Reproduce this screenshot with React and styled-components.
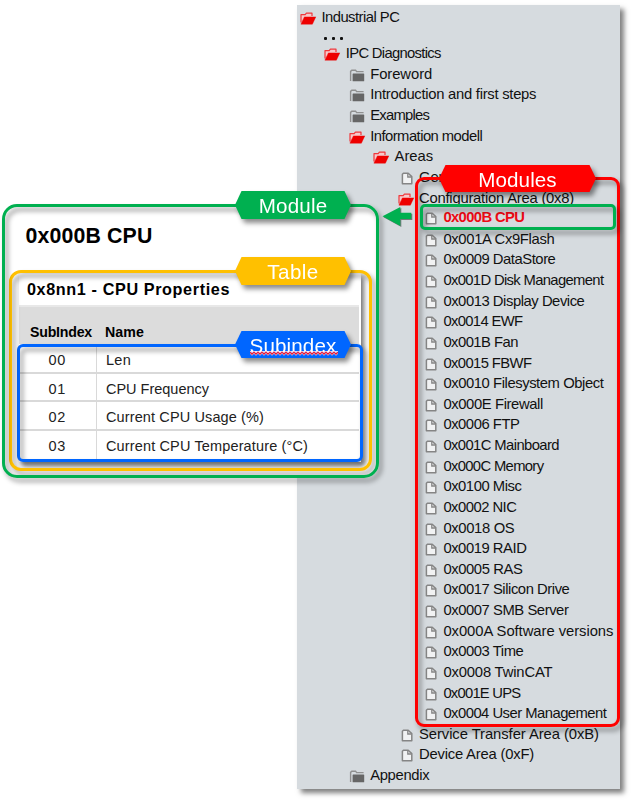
import React, { useLayoutEffect, useRef, useState } from 'react';
import styled, { createGlobalStyle, css } from 'styled-components';

const GREEN = '#00b050';
const AMBER = '#ffc000';
const BLUE = '#0066ff';
const RED = '#ff0000';

const GlobalStyle = createGlobalStyle`
  *, *::before, *::after { box-sizing: border-box; }
  body { margin: 0; background: #fff; font-family: "Liberation Sans", Arial, sans-serif; }
`;

const Page = styled.main`
  position: relative;
  display: grid;
  width: 632px;
  height: 802px;
  overflow: hidden;
  align-items: start;
  > * { grid-area: 1 / 1; }
`;

const TreePanel = styled.nav`
  width: 323px;
  height: 784px;
  margin: 5px 0 0 297px;
  padding-top: 2.1px;
  background: #d6dbdf;
  box-shadow: 4px 4px 5px rgba(0, 0, 0, 0.5);
`;

const TreeRow = styled.div`
  display: flex;
  align-items: center;
  height: 20.64px;
  padding-left: ${p => 3 + p.$depth * 24.4}px;
  padding-bottom: ${p => (p.$active ? 2 : 0)}px;
  font-size: 14.8px;
  color: ${p => (p.$active ? '#ee0a14' : '#111')};
  font-weight: ${p => (p.$active ? 700 : 400)};
`;

const Dots = styled.div`
  display: flex;
  gap: 5px;
  height: 15.2px;
  padding: 9px 0 0 27px;
`;

const Dot = styled.i`
  width: 3px;
  height: 3px;
  border-radius: 1px;
  background: #111;
`;

const IconSlot = styled.span`
  display: flex;
  flex: none;
  width: 21.4px;
  margin-top: 3px;
  svg { display: block; }
`;

const Text = styled.span`
  white-space: pre;
  flex: none;
`;

/* Spreads a label's letters so that it takes exactly the given width. */
function FittedText({ width, children }) {
  const ref = useRef(null);
  const [spacing, setSpacing] = useState(0);
  useLayoutEffect(() => {
    const natural = ref.current.getBoundingClientRect().width;
    setSpacing((width - natural) / children.length);
  }, []);
  return <Text ref={ref} style={{ letterSpacing: spacing }}>{children}</Text>;
}

const OpenFolder = () => (
  <svg width="17" height="13" viewBox="0 0 17 13">
    <path d="M1 10.5V2.6H5.2L6.4 1.2H12V4" fill="#f6c9cb" stroke="#f0383c" strokeWidth="1.2" strokeLinejoin="round" />
    <path d="M4.4 4.9H15.8L12.4 12.2H0.9Z" fill="#ee0000" stroke="#ee0000" strokeWidth="0.4" strokeLinejoin="round" />
  </svg>
);

const ClosedFolder = () => (
  <svg width="17" height="13" viewBox="0 0 17 13">
    <path d="M1.6 12V2.4L2.8 1.2H6.6L7.6 2.6H14.6" fill="none" stroke="#909090" strokeWidth="1.4" />
    <rect x="3.6" y="4.5" width="11.6" height="7.8" rx="0.6" fill="#666" />
  </svg>
);

const PageIcon = () => (
  <svg width="17" height="13" viewBox="0 0 17 13">
    <path d="M5.4 1.2H10.2L13.8 4.6V11.7H4.4V2.2Z" fill="#f1f2f3" stroke="#858585" strokeWidth="1.5" strokeLinejoin="round" />
    <path d="M9.8 1.4V5H13.4" fill="none" stroke="#858585" strokeWidth="1.3" />
  </svg>
);

const ICONS = { open: OpenFolder, closed: ClosedFolder, page: PageIcon };

const rows = [
  [1, 'open', 'IPC Diagnostics', 95],
  [2, 'closed', 'Foreword', 62],
  [2, 'closed', 'Introduction and first steps', 166],
  [2, 'closed', 'Examples', 59],
  [2, 'open', 'Information modell', 112],
  [3, 'open', 'Areas', 38.5],
  [4, 'page', 'General Area (0x0)', 124],
  [4, 'open', 'Configuration Area (0x8)', 155],
  [5, 'page', '0x000B CPU', 81, true],
  [5, 'page', '0x001A Cx9Flash', 111],
  [5, 'page', '0x0009 DataStore', 112],
  [5, 'page', '0x001D Disk Management', 160],
  [5, 'page', '0x0013 Display Device', 141],
  [5, 'page', '0x0014 EWF', 79],
  [5, 'page', '0x001B Fan', 74.5],
  [5, 'page', '0x0015 FBWF', 88],
  [5, 'page', '0x0010 Filesystem Object', 160],
  [5, 'page', '0x000E Firewall', 99.5],
  [5, 'page', '0x0006 FTP', 76],
  [5, 'page', '0x001C Mainboard', 115.5],
  [5, 'page', '0x000C Memory', 100],
  [5, 'page', '0x0100 Misc', 78],
  [5, 'page', '0x0002 NIC', 73],
  [5, 'page', '0x0018 OS', 71],
  [5, 'page', '0x0019 RAID', 83],
  [5, 'page', '0x0005 RAS', 79],
  [5, 'page', '0x0017 Silicon Drive', 126],
  [5, 'page', '0x0007 SMB Server', 125],
  [5, 'page', '0x000A Software versions', 170],
  [5, 'page', '0x0003 Time', 80],
  [5, 'page', '0x0008 TwinCAT', 109],
  [5, 'page', '0x001E UPS', 77],
  [5, 'page', '0x0004 User Management', 163],
  [4, 'page', 'Service Transfer Area (0xB)', 180],
  [4, 'page', 'Device Area (0xF)', 115],
  [2, 'closed', 'Appendix', 59],
];

const Node = ({ row: [depth, icon, label, width, active] }) => {
  const Icon = ICONS[icon];
  return (
    <TreeRow $depth={depth} $active={active}>
      <IconSlot><Icon /></IconSlot>
      <FittedText width={width}>{label}</FittedText>
    </TreeRow>
  );
};

const outline = css`
  content: "";
  position: absolute;
  inset: 0;
  border: 3px solid ${p => p.$color};
  border-radius: ${p => p.$radius}px;
  filter: drop-shadow(3px 4px 2.5px rgba(0, 0, 0, 0.42));
  pointer-events: none;
`;

const ModuleCard = styled.section`
  position: relative;
  width: 377px;
  height: 273.5px;
  margin: 204px 0 0 2px;
  padding: 66px 7px 6.5px;
  border-radius: 15px;
  background: #fff;
  &::after { ${outline} }
`;

const ModuleTitle = styled.h1`
  height: 46px;
  margin: -46px 0 0 16.5px;
  font-size: 21.3px;
  line-height: 25px;
`;

const TableFrame = styled.div`
  position: relative;
  height: 201px;
  width: 363px;
  padding: 4px 10px 8px 10px;
  border-radius: 12px;
  &::after { ${outline} }
`;

const PropertyTable = styled.div`
  height: 188px;
  width: 342px;
  background: #fff;
  box-shadow: 3px 3px 5px rgba(0, 0, 0, 0.55);
`;

const TableTitle = styled.h2`
  height: 31px;
  margin: 0;
  padding: 5px 0 0 8px;
  font-size: 16.2px;
  line-height: 20px;
`;

const HeaderRow = styled.div`
  display: grid;
  grid-template-columns: 77px 1fr;
  width: 340px;
  height: 39px;
  padding-top: 17px;
  background: #dcdcdc;
  border-top: 2px solid #e8e8e8;
  font-size: 14.2px;
  font-weight: 700;
  line-height: 16px;
  > :first-child { padding-left: 11px; }
  > :last-child { padding-left: 9px; }
`;

const Entries = styled.div`
  position: relative;
  width: 346px;
  height: 118px;
  margin-left: -2px;
  padding: 1px 4px 0 2px;
  &::after { ${outline} }
`;

const Entry = styled.div`
  display: grid;
  grid-template-columns: 78px 1fr;
  height: 28.5px;
  border-bottom: 2px solid #d9d9d9;
  font-size: 14.5px;
  line-height: 30px;
  color: #222;
  &:last-child { border-color: transparent; }
  > :first-child { border-right: 1.5px solid #d9d9d9; padding-left: 29.5px; }
  > :last-child { padding-left: 9px; }
`;

const Badge = styled.div`
  position: absolute;
  z-index: 3;
  left: ${p => p.$x}px;
  top: ${p => p.$y}px;
  width: ${p => p.$w}px;
  height: ${p => p.$h}px;
  filter: drop-shadow(3px 4px 2.5px rgba(0, 0, 0, 0.45));
`;

const BadgeFace = styled.div`
  display: flex;
  justify-content: center;
  height: 100%;
  background: ${p => p.$color};
  color: #fff;
  font-size: 20.6px;
  line-height: 29px;
  clip-path: polygon(6.5px 0, calc(100% - 6.5px) 0, 100% 50%, calc(100% - 6.5px) 100%, 6.5px 100%, 0 50%);
`;

const Misspelled = styled.span`
  position: relative;
`;

const Squiggle = styled.svg`
  position: absolute;
  left: 0;
  top: 20px;
`;

const squigglePoints = Array.from({ length: 45 }, (_, i) => `${i * 2},${i % 2 ? 3.2 : 1.2}`).join(' ');

const Highlight = styled.div`
  position: absolute;
  left: ${p => p.$x}px;
  top: ${p => p.$y}px;
  width: ${p => p.$w}px;
  height: ${p => p.$h}px;
  &::after { ${outline} }
`;

const Arrow = styled.svg`
  position: absolute;
  left: 382px;
  top: 206px;
  filter: drop-shadow(1px 1px 0.7px rgba(0, 0, 0, 0.45));
`;

const entries = [
  ['00', 'Len', 25],
  ['01', 'CPU Frequency', 103],
  ['02', 'Current CPU Usage (%)', 158],
  ['03', 'Current CPU Temperature (°C)', 202],
];

export default function App() {
  return (
    <>
      <GlobalStyle />
      <Page>
        <TreePanel>
          <Node row={[0, 'open', 'Industrial PC', 78]} />
          <Dots><Dot /><Dot /><Dot /></Dots>
          {rows.map(row => <Node key={row[2]} row={row} />)}
        </TreePanel>

        <ModuleCard $color={GREEN} $radius={15}>
          <ModuleTitle><FittedText width={127}>0x000B CPU</FittedText></ModuleTitle>
          <TableFrame $color={AMBER} $radius={12}>
            <PropertyTable>
              <TableTitle><FittedText width={203}>0x8nn1 - CPU Properties</FittedText></TableTitle>
              <HeaderRow>
                <div><FittedText width={62}>SubIndex</FittedText></div>
                <div><FittedText width={39}>Name</FittedText></div>
              </HeaderRow>
              <Entries $color={BLUE} $radius={6}>
                {entries.map(([index, name, width]) => (
                  <Entry key={index}>
                    <div><FittedText width={17.5}>{index}</FittedText></div>
                    <div><FittedText width={width}>{name}</FittedText></div>
                  </Entry>
                ))}
              </Entries>
            </PropertyTable>
          </TableFrame>
        </ModuleCard>

        <Highlight $x={415} $y={177} $w={205} $h={550} $color={RED} $radius={9} />
        <Highlight $x={420} $y={204} $w={196} $h={26} $color={GREEN} $radius={5} />
        <Arrow width="30" height="21" viewBox="0 0 30 21">
          <path d="M0.5 10.2L18.3 1V6.7H29.3V13H18.3V20Z" fill={GREEN} />
        </Arrow>

        <Badge $x={235} $y={191} $w={116} $h={28}>
          <BadgeFace $color={GREEN}><FittedText width={68.5}>Module</FittedText></BadgeFace>
        </Badge>
        <Badge $x={235} $y={257} $w={116} $h={28}>
          <BadgeFace $color={AMBER}><FittedText width={51.5}>Table</FittedText></BadgeFace>
        </Badge>
        <Badge $x={235} $y={331} $w={116} $h={27}>
          <BadgeFace $color={BLUE}>
            <Misspelled>
              <FittedText width={87}>Subindex</FittedText>
              <Squiggle width="88" height="5" viewBox="0 0 88 5">
                <path d="M0 0.7H88" stroke="#fff" strokeWidth="1" />
                <polyline points={squigglePoints} fill="none" stroke="#f0c4dc" strokeWidth="2.2" />
                <polyline points={squigglePoints} fill="none" stroke="#e01838" strokeWidth="1.1" />
              </Squiggle>
            </Misspelled>
          </BadgeFace>
        </Badge>
        <Badge $x={439} $y={165} $w={157} $h={27}>
          <BadgeFace $color={RED}><FittedText width={78.5}>Modules</FittedText></BadgeFace>
        </Badge>
      </Page>
    </>
  );
}
